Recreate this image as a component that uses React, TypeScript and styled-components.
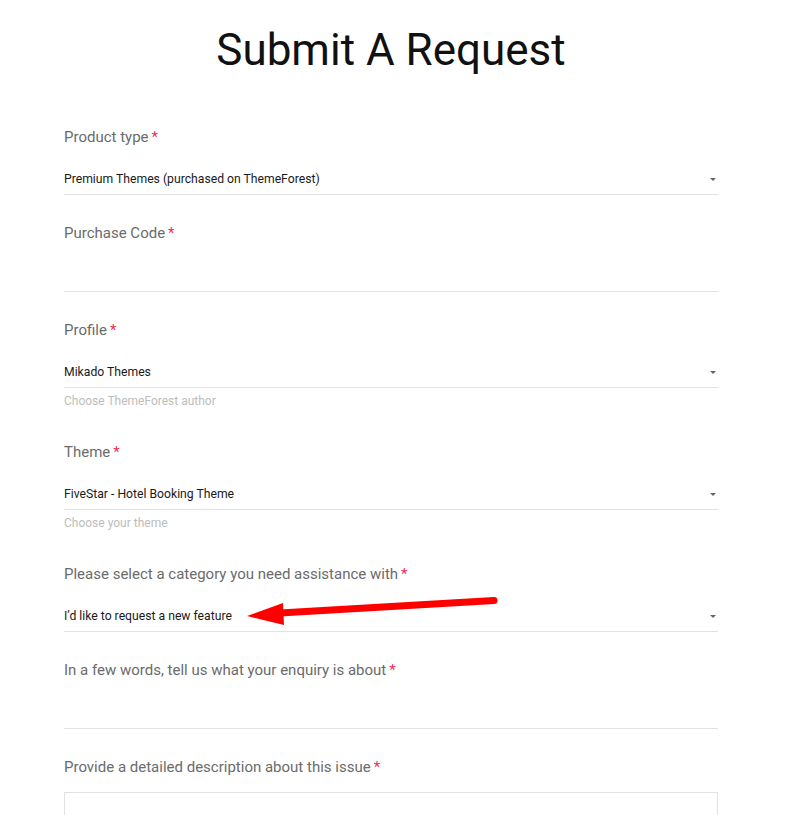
import React, { FunctionComponent } from 'react'
import styled, { createGlobalStyle } from 'styled-components'

const GlobalStyle = createGlobalStyle`
	html, body {
		margin: 0;
		padding: 0;
		background: #fff;
		font-family: Roboto, 'Liberation Sans', Arial, sans-serif;
		overflow: hidden;
	}
`

const Page = styled.div`
	width: 654px;
	margin-left: 64px;
	padding-top: 23.5px;
`

const Title = styled.h1`
	margin: 0 0 50px;
	font-size: 44px;
	line-height: 53px;
	font-weight: 400;
	text-align: center;
	color: #111;
`

const Field = styled.div<{ $hasHint?: boolean }>`
	position: relative;
	margin-bottom: ${(props) => (props.$hasHint ? 0 : 28)}px;
`

const Label = styled.div`
	font-size: 15px;
	line-height: 20px;
	color: #6b6b6b;
`

const Required = styled.span`
	color: #ec2f57;
	margin-left: 3px;
`

const Input = styled.div`
	position: relative;
	box-sizing: border-box;
	height: 48.5px;
	padding: 23px 20px 0 0;
	font-size: 12.2px;
	line-height: 18px;
	color: #1a1a1a;
	border-bottom: 1px solid #e2e2e2;
`

const Caret = styled.span`
	position: absolute;
	right: 2px;
	top: 31px;
	width: 0;
	height: 0;
	border-left: 3px solid transparent;
	border-right: 3px solid transparent;
	border-top: 3px solid #666;
`

const Hint = styled.div`
	margin: 5px 0 0;
	padding-bottom: 32.5px;
	font-size: 12px;
	line-height: 16px;
	color: #bdbdbd;
`

const TextArea = styled.div`
	margin-top: 15.5px;
	height: 60px;
	border: 1px solid #e2e2e2;
	border-bottom: none;
`

const ArrowLayer = styled.svg`
	position: absolute;
	left: 0;
	top: 0;
	pointer-events: none;
`

type FieldProps = {
	label: string
	value?: string
	select?: boolean
	hint?: string
}

const FormField: FunctionComponent<FieldProps> = ({ label, value, select, hint }) => (
	<Field $hasHint={!!hint}>
		<Label>
			{label}
			<Required>*</Required>
		</Label>
		<Input>
			{value}
			{select ? <Caret /> : null}
		</Input>
		{hint ? <Hint>{hint}</Hint> : null}
	</Field>
)

export default function App() {
	return (
		<>
			<GlobalStyle />
			<Page>
				<Title>Submit A Request</Title>
				<FormField
					label="Product type"
					value="Premium Themes (purchased on ThemeForest)"
					select
				/>
				<FormField label="Purchase Code" />
				<FormField
					label="Profile"
					value="Mikado Themes"
					select
					hint="Choose ThemeForest author"
				/>
				<FormField
					label="Theme"
					value="FiveStar - Hotel Booking Theme"
					select
					hint="Choose your theme"
				/>
				<FormField
					label="Please select a category you need assistance with"
					value="I’d like to request a new feature"
					select
				/>
				<FormField label="In a few words, tell us what your enquiry is about" />
				<Field>
					<Label>
						Provide a detailed description about this issue
						<Required>*</Required>
					</Label>
					<TextArea />
				</Field>
			</Page>
			<ArrowLayer width="801" height="815" viewBox="0 0 801 815">
				<line
					x1="494"
					y1="600.5"
					x2="280"
					y2="613"
					stroke="#ff0000"
					strokeWidth="7"
					strokeLinecap="round"
				/>
				<polygon points="247,616 283,603 284,625" fill="#ff0000" />
			</ArrowLayer>
		</>
	)
}
